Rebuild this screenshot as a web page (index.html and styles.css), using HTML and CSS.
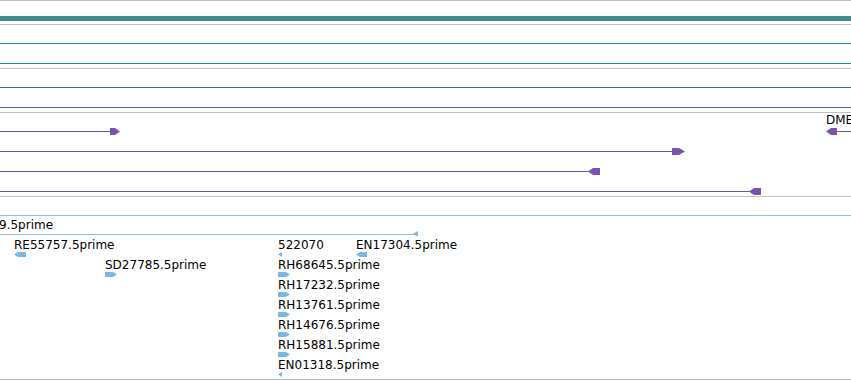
FILE: index.html
```html
<!DOCTYPE html>
<html lang="en">
<head>
    <meta charset="UTF-8">
    <meta name="viewport" content="width=device-width, initial-scale=1.0">
    <title>track view</title>
    <link rel="stylesheet" href="styles.css">
</head>
<body>
    <div class="view">
        <!-- reference sequence -->
        <div class="track ref">
            <div class="ref-bar"></div>
        </div>

        <!-- two plain feature tracks -->
        <div class="track pair">
            <div class="row"><div class="hline teal"></div></div>
            <div class="row"><div class="hline teal"></div></div>
        </div>
        <div class="track pair">
            <div class="row"><div class="hline blue"></div></div>
            <div class="row"><div class="hline blue"></div></div>
        </div>

        <!-- transcripts -->
        <div class="track transcripts">
            <svg class="canvas" width="851" height="83">
                <g class="tx">
                    <rect x="0" y="18" width="111" height="1"/>
                    <polygon points="110,15 115,15 120,18.5 115,22 110,22"/>

                    <rect x="835" y="18" width="16" height="1"/>
                    <polygon points="826,18.5 831,15 837,15 837,22 831,22"/>

                    <rect x="0" y="38" width="674" height="1"/>
                    <polygon points="672,35 679,35 685,38.5 679,42 672,42"/>

                    <rect x="0" y="58" width="590" height="1"/>
                    <polygon points="588,58.5 593,55 600,55 600,62 593,62"/>

                    <rect x="0" y="78" width="751" height="1"/>
                    <polygon points="749,78.5 754,75 761,75 761,82 754,82"/>
                </g>
            </svg>
            <span class="label" style="left: 826px; top: 0px;">DME</span>
        </div>

        <!-- 5prime reads -->
        <div class="track reads">
            <svg class="canvas" width="851" height="182">
                <g class="rd">
                    <rect class="span" x="0" y="18" width="851" height="1"/>
                    <rect x="0" y="37" width="414" height="1"/>
                    <polygon points="412,37.5 418,34 418,39"/>

                    <polygon points="14,57.5 18,55 26,55 26,60 18,60"/>
                    <polygon points="278,57.5 282,55 282,60"/>
                    <polygon points="356,57.5 360,55 367,55 367,60 360,60"/>

                    <polygon points="105,75 113,75 117,77.5 113,80 105,80"/>
                    <polygon points="278,75 286,75 290,77.5 286,80 278,80"/>
                    <polygon points="278,95 286,95 290,97.5 286,100 278,100"/>
                    <polygon points="278,115 286,115 290,117.5 286,120 278,120"/>
                    <polygon points="278,135 286,135 290,137.5 286,140 278,140"/>
                    <polygon points="278,155 286,155 290,157.5 286,160 278,160"/>
                    <polygon points="278,177.5 282,175 282,180"/>
                </g>
            </svg>
            <span class="label" style="left: -1px; top: 21px;">9.5prime</span>
            <span class="label" style="left: 14px; top: 41px;">RE55757.5prime</span>
            <span class="label" style="left: 278px; top: 41px;">522070</span>
            <span class="label" style="left: 356px; top: 41px;">EN17304.5prime</span>
            <span class="label" style="left: 105px; top: 61px;">SD27785.5prime</span>
            <span class="label" style="left: 278px; top: 61px;">RH68645.5prime</span>
            <span class="label" style="left: 278px; top: 81px;">RH17232.5prime</span>
            <span class="label" style="left: 278px; top: 101px;">RH13761.5prime</span>
            <span class="label" style="left: 278px; top: 121px;">RH14676.5prime</span>
            <span class="label" style="left: 278px; top: 141px;">RH15881.5prime</span>
            <span class="label" style="left: 278px; top: 161px;">EN01318.5prime</span>
        </div>
    </div>
</body>
</html>
```

FILE: styles.css
```css
body {
    margin: 0;
    background: #fff;
    font-family: "DejaVu Sans", sans-serif;
    overflow: hidden;
}
.view {
    width: 851px;
    height: 380px;
    display: flex;
    flex-direction: column;
    border-top: 1px solid #c0c0c0;
    overflow: hidden;
}
.track {
    position: relative;
    flex: none;
    border-bottom: 1px solid #c0c0c0;
    overflow: hidden;
}
.ref {
    height: 8px;
    padding-top: 15px;
}
.ref-bar {
    height: 5px;
    background: #3f8e8f;
}
.pair {
    height: 35px;
    padding-top: 8px;
}
.row {
    height: 20px;
    position: relative;
}
.hline {
    position: absolute;
    left: 0;
    right: 0;
    top: 10px;
    height: 1px;
}
.hline.teal { background: #1f8bab; }
.hline.blue { background: #3a67b8; }
.transcripts { height: 83px; }
.reads { height: 182px; }
.canvas {
    display: block;
    shape-rendering: crispEdges;
}
.tx rect { fill: #6b55a2; }
.tx polygon { fill: #7754b0; shape-rendering: auto; }
.rd rect { fill: #8dbcdb; }
.rd rect.span { fill: #93c0de; }
.rd polygon { fill: #7db6df; shape-rendering: auto; }
.label {
    position: absolute;
    font-size: 12px;
    line-height: 14px;
    color: #000;
    white-space: nowrap;
}
```
